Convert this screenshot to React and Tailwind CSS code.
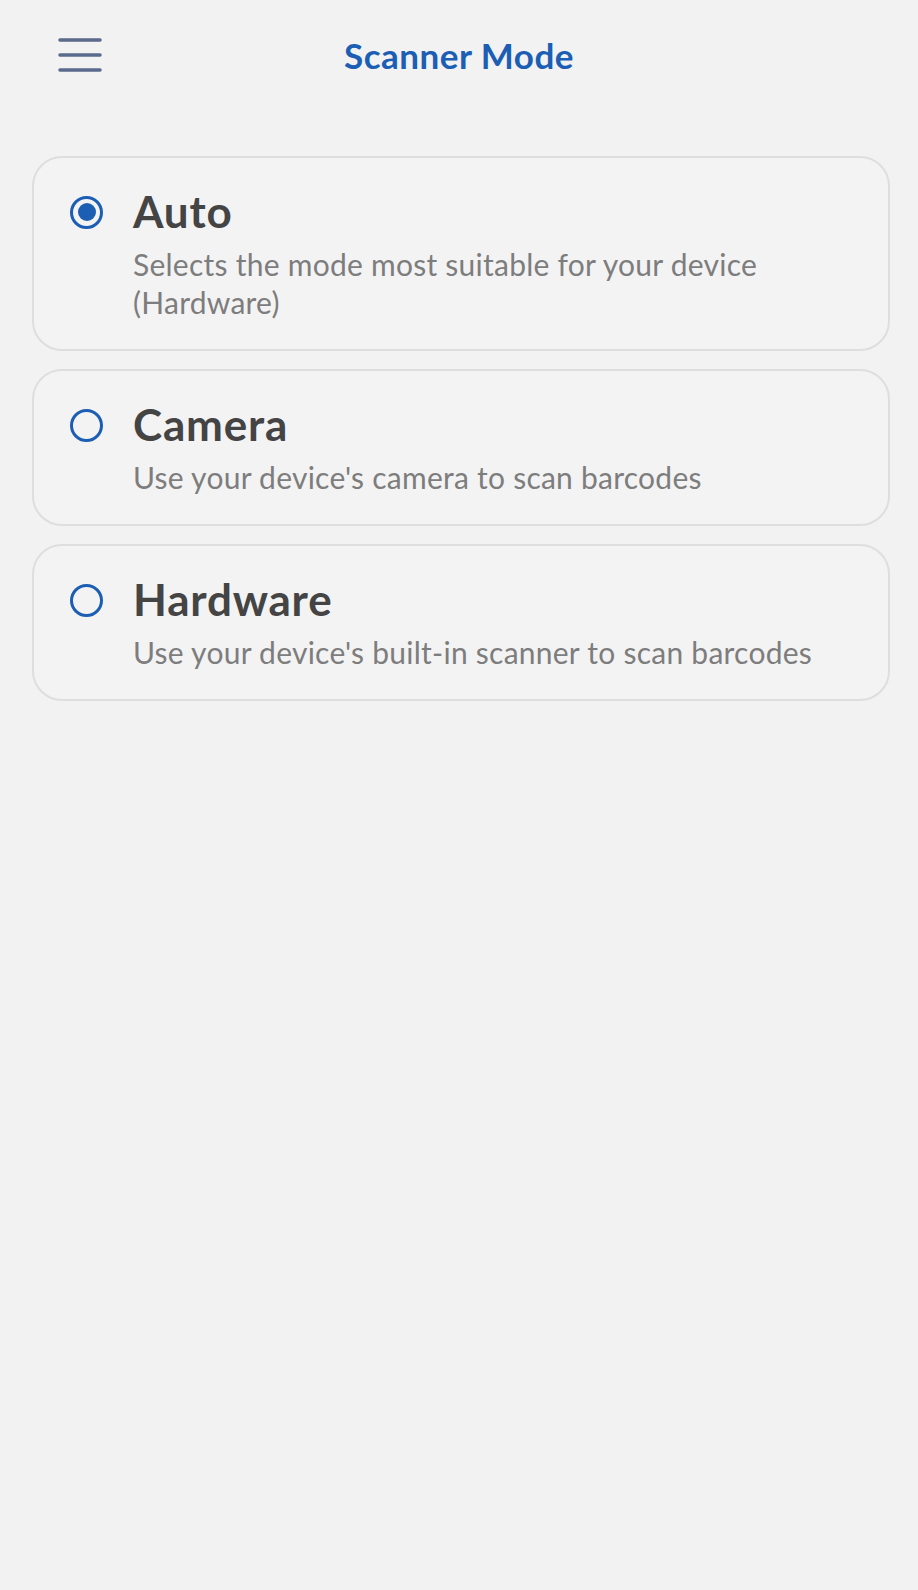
import { useState } from 'react';

const modes = [
  { id: 'auto', title: 'Auto', desc: 'Selects the mode most suitable for your device (Hardware)' },
  { id: 'camera', title: 'Camera', desc: "Use your device's camera to scan barcodes" },
  { id: 'hardware', title: 'Hardware', desc: "Use your device's built-in scanner to scan barcodes" },
];

function MenuIcon() {
  return (
    <svg width="44" height="36" viewBox="0 0 44 36" fill="none">
      <path d="M2 3h40M2 18h40M2 33h40" stroke="#5a6a8c" strokeWidth="3.5" strokeLinecap="round" />
    </svg>
  );
}

function Radio({ checked }) {
  return (
    <div className="mt-[11px] w-[33px] h-[33px] shrink-0 rounded-full border-[3.5px] border-[#1b5eb3] flex items-center justify-center">
      {checked && <div className="w-[18px] h-[18px] rounded-full bg-[#1b5eb3]" />}
    </div>
  );
}

export default function App() {
  const [mode, setMode] = useState('auto');

  return (
    <div className="min-h-screen bg-[#f2f2f3] font-['Lato','Noto_Sans',sans-serif]">
      <header className="h-[110px] grid grid-cols-[1fr_auto_1fr] items-center">
        <button className="ml-[58px] w-[44px] h-[36px] flex items-center">
          <MenuIcon />
        </button>
        <h1 className="text-[35px] leading-none font-bold tracking-[0.5px] text-[#1b5eb3]">Scanner Mode</h1>
        <div />
      </header>

      <div className="mt-[46px] pl-8 pr-[28px] flex flex-col gap-[18px]">
        {modes.map((m) => (
          <button
            key={m.id}
            onClick={() => setMode(m.id)}
            className="text-left flex items-start gap-[30px] border-2 border-[#dedede] rounded-[30px] bg-[#f3f3f4] pl-[36px] pr-6 pt-[26.5px] pb-[28px]"
          >
            <Radio checked={mode === m.id} />
            <div className="flex flex-col">
              <div className="text-[44px] leading-[53px] font-bold tracking-[0.8px] text-[#444444]">{m.title}</div>
              <div className="mt-[7.5px] text-[30px] leading-[38px] tracking-[0.25px] text-[#7d7d7d]">{m.desc}</div>
            </div>
          </button>
        ))}
      </div>
    </div>
  );
}
